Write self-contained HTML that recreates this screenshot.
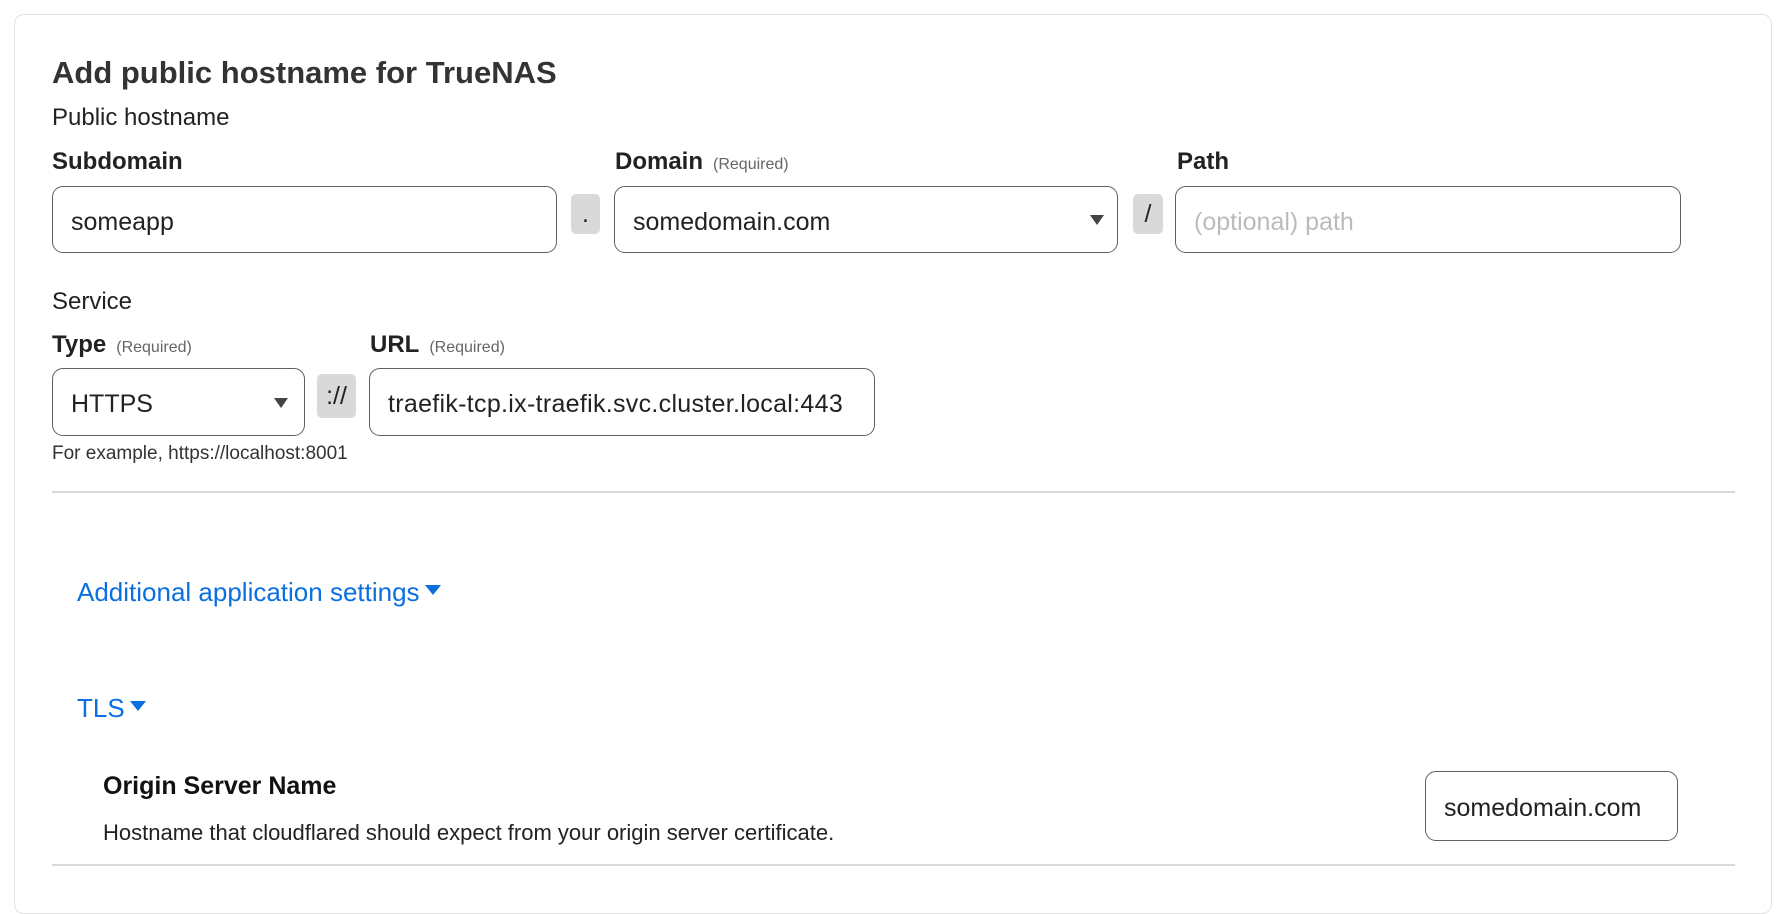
<!DOCTYPE html>
<html><head><meta charset="utf-8"><style>
*{box-sizing:border-box;margin:0;padding:0}
body{width:1786px;height:883px;background:#fff;font-family:"Liberation Sans",sans-serif;color:#222;position:relative;overflow:hidden}
.a{position:absolute;white-space:nowrap}
.card{position:absolute;left:14px;top:14px;width:1758px;height:900px;border:1px solid #e2e2e2;border-radius:10px}
.lbl{font-weight:bold;font-size:24px;color:#222}
.req{font-weight:normal;font-size:16px;color:#666;margin-left:10px}
.inp{position:absolute;border:1px solid #5f5f5f;border-radius:11px;background:#fff;font-size:25px;color:#222;display:flex;align-items:center;padding-left:18px;padding-top:5px;white-space:nowrap}
.sep{position:absolute;background:#d9d9d9;border-radius:5px;font-size:25px;display:flex;align-items:center;justify-content:center;color:#222}
.caret{position:absolute;width:0;height:0;border-left:7px solid transparent;border-right:7px solid transparent;border-top:10px solid #444}
.hr{position:absolute;left:52px;width:1683px;height:2px;background:#d9d9d9}
.blue{color:#0b6fe0;font-size:26px}
.tri{display:inline-block;width:0;height:0;border-left:8px solid transparent;border-right:8px solid transparent;border-top:10px solid #0b6fe0;vertical-align:middle;margin-left:5px;position:relative;top:-4px}
</style></head><body>
<div class="card"></div>
<div class="a" style="left:52px;top:55px;font-size:31px;font-weight:bold;color:#333">Add public hostname for TrueNAS</div>
<div class="a" style="left:52px;top:104px;font-size:24px">Public hostname</div>
<div class="a lbl" style="left:52px;top:148px">Subdomain</div>
<div class="a lbl" style="left:615px;top:148px">Domain<span class="req">(Required)</span></div>
<div class="a lbl" style="left:1177px;top:148px">Path</div>
<div class="inp" style="left:52px;top:186px;width:505px;height:67px">someapp</div>
<div class="sep" style="left:571px;top:194px;width:29px;height:40px">.</div>
<div class="inp" style="left:614px;top:186px;width:504px;height:67px">somedomain.com</div>
<div class="caret" style="left:1090px;top:215px"></div>
<div class="sep" style="left:1133px;top:194px;width:30px;height:40px">/</div>
<div class="inp" style="left:1175px;top:186px;width:506px;height:67px;color:#bbb">(optional) path</div>
<div class="a" style="left:52px;top:288px;font-size:24px">Service</div>
<div class="a lbl" style="left:52px;top:331px">Type<span class="req">(Required)</span></div>
<div class="a lbl" style="left:370px;top:331px">URL<span class="req">(Required)</span></div>
<div class="inp" style="left:52px;top:368px;width:253px;height:68px">HTTPS</div>
<div class="caret" style="left:274px;top:398px"></div>
<div class="sep" style="left:317px;top:374px;width:39px;height:44px">://</div>
<div class="inp" style="left:369px;top:368px;width:506px;height:68px;font-size:25px;letter-spacing:0.3px">traefik-tcp.ix-traefik.svc.cluster.local:443</div>
<div class="a" style="left:52px;top:443px;font-size:19px;color:#333">For example, https://localhost:8001</div>
<div class="hr" style="top:491px"></div>
<div class="a blue" style="left:77px;top:577px">Additional application settings<span class="tri"></span></div>
<div class="a blue" style="left:77px;top:693px">TLS<span class="tri"></span></div>
<div class="a lbl" style="left:103px;top:772px;color:#111;font-size:25px">Origin Server Name</div>
<div class="a" style="left:103px;top:820px;font-size:22px;color:#222">Hostname that cloudflared should expect from your origin server certificate.</div>
<div class="inp" style="left:1425px;top:771px;width:253px;height:70px;padding-left:18px">somedomain.com</div>
<div class="hr" style="top:864px"></div>
</body></html>
